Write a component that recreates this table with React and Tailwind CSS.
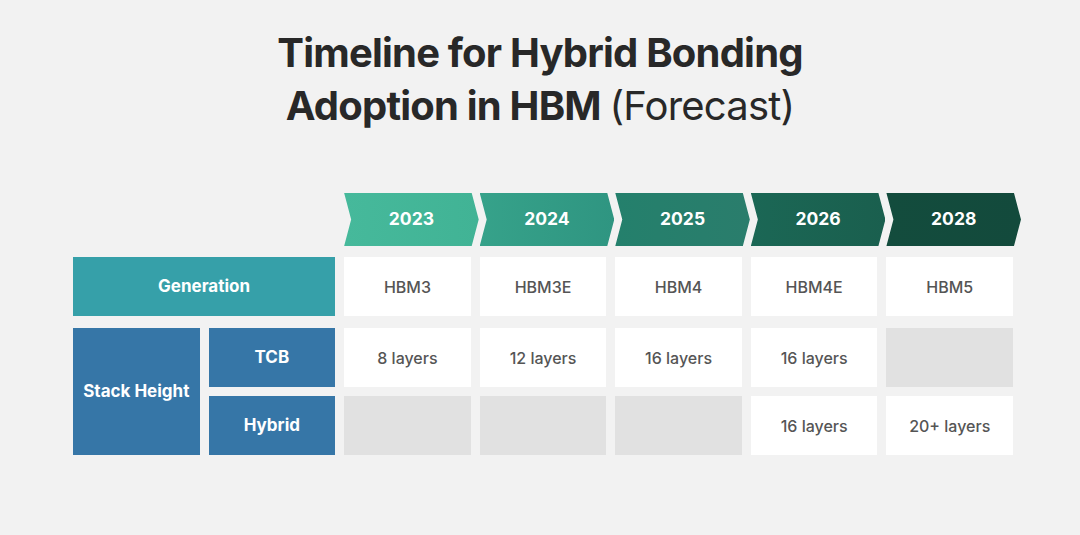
import React from 'react';

const years = [
  { y: '2023', bg: 'bg-gradient-to-r from-[#46b99b] to-[#41b395]' },
  { y: '2024', bg: 'bg-gradient-to-r from-[#36a28a] to-[#2f9581]' },
  { y: '2025', bg: 'bg-gradient-to-r from-[#24806c] to-[#2a7d6c]' },
  { y: '2026', bg: 'bg-gradient-to-r from-[#1b6755] to-[#1a5f4e]' },
  { y: '2028', bg: 'bg-gradient-to-r from-[#134c3d] to-[#134a3c]' },
];

const gens = ['HBM3', 'HBM3E', 'HBM4', 'HBM4E', 'HBM5'];
const tcb = ['8 layers', '12 layers', '16 layers', '16 layers', null];
const hybrid = [null, null, null, '16 layers', '20+ layers'];

const chevron = {
  clipPath: 'polygon(0 0, calc(100% - 7px) 0, 100% 50%, calc(100% - 7px) 100%, 0 100%, 7px 50%)',
};

const Cell = ({ text }) =>
  text ? (
    <div className="bg-white flex items-center justify-center text-[16px] font-medium text-[#555555]">
      {text}
    </div>
  ) : (
    <div className="bg-[#e1e1e1]"></div>
  );

const App = () => {
  return (
    <div className="w-[1080px] h-[535px] bg-[#f2f2f2] overflow-hidden" style={{ fontFamily: 'Inter, "Noto Sans", sans-serif' }}>
      <h1 className="pt-[26px] text-center text-[40px] leading-[53px] font-bold tracking-[-0.02em] text-[#282828]">
        Timeline for Hybrid Bonding
        <br />
        Adoption in HBM <span className="font-normal">(Forecast)</span>
      </h1>

      <div className="ml-[73px] w-[940px] mt-[61px]">
        {/* year headers */}
        <div className="grid grid-cols-7 gap-x-[9px] h-[53px]">
          {years.map((yr, i) => (
            <div
              key={yr.y}
              className={`${yr.bg} ${i === 0 ? 'col-start-3' : ''} w-[calc(100%+8px)] h-[53px] flex items-center justify-center text-white font-bold text-[17.5px]`}
              style={chevron}
            >
              {yr.y}
            </div>
          ))}
        </div>

        {/* generation */}
        <div className="grid grid-cols-7 gap-x-[9px] h-[59px] mt-[11px]">
          <div className="col-span-2 bg-[#36a0a9] flex items-center justify-center text-white font-bold text-[17px]">
            Generation
          </div>
          {gens.map((g) => (
            <Cell key={g} text={g} />
          ))}
        </div>

        {/* stack height */}
        <div className="grid grid-cols-7 grid-rows-[59px_59px] gap-x-[9px] gap-y-[9px] mt-[12px]">
          <div className="row-span-2 bg-[#3676a7] flex items-center justify-center text-white font-bold text-[17px]">
            Stack Height
          </div>
          <div className="bg-[#3676a7] flex items-center justify-center text-white font-bold text-[17px]">TCB</div>
          {tcb.map((t, i) => (
            <Cell key={'t' + i} text={t} />
          ))}
          <div className="bg-[#3676a7] flex items-center justify-center text-white font-bold text-[17px]">Hybrid</div>
          {hybrid.map((t, i) => (
            <Cell key={'h' + i} text={t} />
          ))}
        </div>
      </div>
    </div>
  );
};

export default App;
